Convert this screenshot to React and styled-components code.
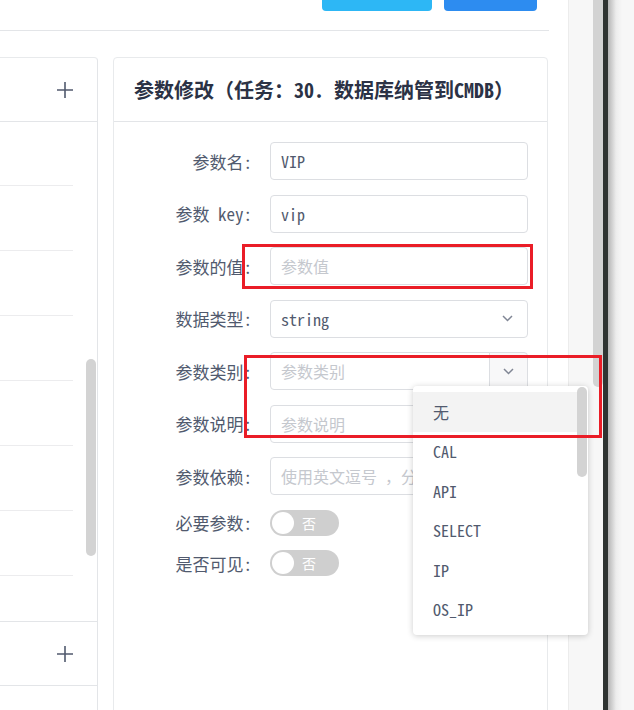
import React from 'react';
import styled, { createGlobalStyle } from 'styled-components';

const GlobalStyle = createGlobalStyle`
  body {
    margin: 0;
    font-family: "Noto Sans Mono CJK SC", "Liberation Mono", "Noto Sans CJK SC", monospace;
    color: #515a6e;
  }
`;

const Page = styled.div`
  position: relative;
  display: flex;
  width: 634px;
  height: 710px;
  overflow: hidden;
  background: #fff;
`;

const Main = styled.div`
  width: 568px;
  flex: none;
  display: flex;
  flex-direction: column;
`;

const TopBar = styled.div`
  flex: none;
  width: 537px;
  height: 30px;
  padding-right: 12px;
  border-bottom: 1px solid #e3e5e8;
  display: flex;
  justify-content: flex-end;
  align-items: flex-start;
  gap: 12px;
`;

const TopButton = styled.div`
  width: ${p => p.w}px;
  height: 11px;
  border-radius: 0 0 4px 4px;
  background: ${p => p.bg};
`;

const Body = styled.div`
  flex: none;
  display: flex;
  gap: 15px;
  padding-top: 26px;
`;

const LeftCard = styled.div`
  width: 97px;
  flex: none;
  border-top: 1px solid #e8eaec;
  border-right: 1px solid #e3e5e8;
  border-top-right-radius: 4px;
`;

const CardHead = styled.div`
  height: 63px;
  border-bottom: 1px solid #e3e5e8;
  display: flex;
  align-items: center;
  justify-content: ${p => (p.end ? 'flex-end' : 'flex-start')};
  padding: ${p => (p.end ? '0 24px 0 0' : '0 0 0 20px')};
  ${p => p.top && 'border-top: 1px solid #e3e5e8;'}
`;

const ListArea = styled.div`
  height: 499px;
  display: flex;
  gap: 13px;
`;

const List = styled.div`
  width: 73px;
  display: flex;
  flex-direction: column;
  margin-top: -1px;
`;

const ListRow = styled.div`
  height: 64px;
  flex: none;
  border-bottom: 1px solid #ececee;
`;

const ScrollThumb = styled.div`
  width: ${p => p.w || 10}px;
  height: ${p => p.h}px;
  margin-top: ${p => p.top || 0}px;
  background: #d3d3d3;
  border-radius: ${p => p.radius || '5px'};
  flex: none;
`;

const RightCard = styled.div`
  width: 433px;
  height: 700px;
  flex: none;
  border: 1px solid #e8eaec;
  border-radius: 4px;
`;

const Title = styled.div`
  font-size: 20px;
  font-weight: 700;
  color: #2b3245;
  white-space: nowrap;
`;

const Form = styled.div`
  display: flex;
  flex-direction: column;
  gap: 14.5px;
  padding-top: 20px;
`;

const Row = styled.div`
  position: relative;
  display: grid;
  grid-template-columns: 156px 258px;
  align-items: center;
  height: ${p => (p.small ? 26 : 38)}px;
`;

const Label = styled.div`
  text-align: right;
  padding-right: 18px;
  font-size: 17px;
  color: #515a6e;
  white-space: nowrap;
`;

const Field = styled.div`
  box-sizing: border-box;
  height: 38px;
  display: flex;
  align-items: center;
  justify-content: space-between;
  padding: 0 14px 0 10px;
  border: 1px solid #dcdee2;
  border-radius: 4px;
  font-size: 16px;
  color: ${p => (p.placeholder ? '#c5c8ce' : '#515a6e')};
  white-space: pre;
  overflow: hidden;
`;

const Group = styled.div`
  display: flex;
  height: 38px;
`;

const GroupInput = styled(Field)`
  flex: 1;
  border-radius: 4px 0 0 4px;
`;

const Append = styled.div`
  box-sizing: border-box;
  width: 39px;
  border: 1px solid #dcdee2;
  border-radius: 0 4px 4px 0;
  margin-left: -1px;
  background: #f8f8f9;
  display: flex;
  align-items: center;
  justify-content: center;
`;

const Switch = styled.div`
  box-sizing: border-box;
  width: 69px;
  height: 26px;
  border-radius: 13px;
  background: #cfcfcf;
  display: flex;
  align-items: center;
  padding-left: 2px;
  gap: 8px;
  color: #fff;
  font-size: 14px;
`;

const Knob = styled.div`
  width: 22px;
  height: 22px;
  border-radius: 50%;
  background: #fff;
`;

const Dropdown = styled.div`
  position: absolute;
  left: 299px;
  top: 34px;
  z-index: 5;
  box-sizing: border-box;
  width: 175px;
  padding: 6px 0;
  background: #fff;
  border-radius: 4px;
  box-shadow: 0 1px 6px rgba(0, 0, 0, 0.2);
`;

const Option = styled.div`
  height: 39.5px;
  display: flex;
  align-items: center;
  padding-left: 20px;
  margin-right: 11px;
  font-size: 16px;
  color: #515a6e;
  background: ${p => (p.active ? '#f3f3f3' : 'transparent')};
`;

const DropScroll = styled.div`
  position: absolute;
  top: 1px;
  right: 1px;
  width: 10px;
  height: 90px;
  border-radius: 5px;
  background: #d3d3d3;
`;

const Gutter = styled.div`
  width: 34px;
  flex: none;
  background: #f7f7f7;
  border-left: 1px solid #ececec;
  display: flex;
  justify-content: flex-end;
`;

const DarkEdge = styled.div`
  width: 5px;
  flex: none;
  background: #2f3432;
`;

const Shade = styled.div`
  flex: 1;
  background: linear-gradient(to right, #b5b5b5, #ececec 8px, #f7f7f7 14px);
`;

const Mark = styled.div`
  position: absolute;
  z-index: 10;
  left: ${p => p.x}px;
  top: ${p => p.y}px;
  width: ${p => p.w}px;
  height: ${p => p.h}px;
  box-sizing: border-box;
  border: 3px solid #ea1d27;
`;

const Plus = () => (
  <svg width="16" height="16" viewBox="0 0 16 16">
    <path d="M8 0v16M0 8h16" stroke="#515a6e" strokeWidth="1.6" fill="none" />
  </svg>
);

const Chevron = () => (
  <svg width="11" height="7" viewBox="0 0 11 7">
    <path d="M1 1l4.5 4.5L10 1" stroke="#808695" strokeWidth="1.5" fill="none" />
  </svg>
);

const options = ['无', 'CAL', 'API', 'SELECT', 'IP', 'OS_IP'];

export default function App() {
  return (
    <Page>
      <GlobalStyle />
      <Main>
        <TopBar>
          <TopButton w={110} bg="#2db7f5" />
          <TopButton w={93} bg="#2d8cf0" />
        </TopBar>
        <Body>
          <LeftCard>
            <CardHead end>
              <Plus />
            </CardHead>
            <ListArea>
              <List>
                {[0, 1, 2, 3, 4, 5, 6].map(i => (
                  <ListRow key={i} />
                ))}
              </List>
              <ScrollThumb top={237} h={197} />
            </ListArea>
            <CardHead end top>
              <Plus />
            </CardHead>
          </LeftCard>
          <RightCard>
            <CardHead>
              <Title>参数修改（任务：30. 数据库纳管到CMDB）</Title>
            </CardHead>
            <Form>
              <Row>
                <Label>参数名:</Label>
                <Field>VIP</Field>
              </Row>
              <Row>
                <Label>参数 key:</Label>
                <Field>vip</Field>
              </Row>
              <Row>
                <Label>参数的值:</Label>
                <Field placeholder="1">参数值</Field>
              </Row>
              <Row>
                <Label>数据类型:</Label>
                <Field>
                  string
                  <Chevron />
                </Field>
              </Row>
              <Row>
                <Label>参数类别:</Label>
                <Group>
                  <GroupInput placeholder="1">参数类别</GroupInput>
                  <Append>
                    <Chevron />
                  </Append>
                </Group>
                <Dropdown>
                  {options.map((o, i) => (
                    <Option key={o} active={i === 0}>
                      {o}
                    </Option>
                  ))}
                  <DropScroll />
                </Dropdown>
              </Row>
              <Row>
                <Label>参数说明:</Label>
                <Field placeholder="1">参数说明</Field>
              </Row>
              <Row>
                <Label>参数依赖:</Label>
                <Field placeholder="1">使用英文逗号 ，分隔</Field>
              </Row>
              <Row small>
                <Label>必要参数:</Label>
                <Switch>
                  <Knob />否
                </Switch>
              </Row>
              <Row small>
                <Label>是否可见:</Label>
                <Switch>
                  <Knob />否
                </Switch>
              </Row>
            </Form>
          </RightCard>
        </Body>
      </Main>
      <Gutter>
        <ScrollThumb w={10} h={387} radius="0 0 5px 5px" />
      </Gutter>
      <DarkEdge />
      <Shade />
      <Mark x={242} y={244} w={291} h={45} />
      <Mark x={244} y={355} w={358} h={83} />
    </Page>
  );
}
